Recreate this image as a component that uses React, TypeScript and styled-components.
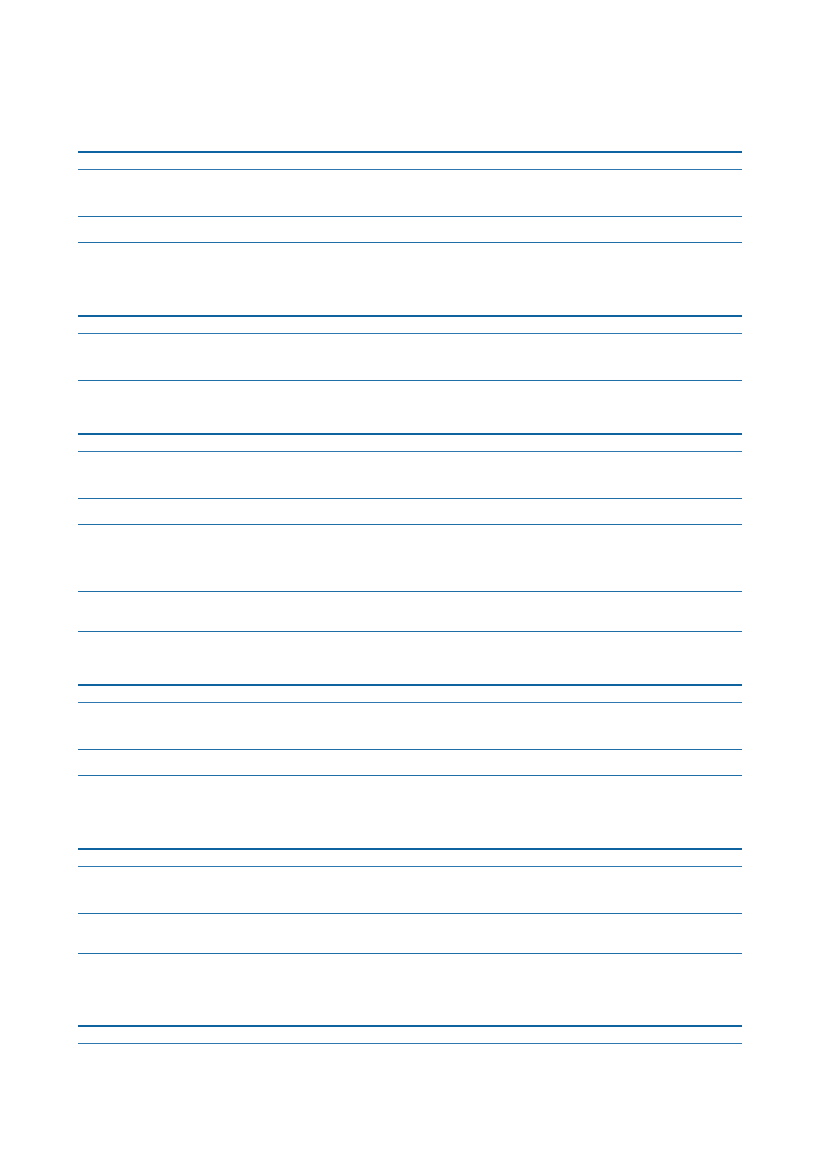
import * as React from 'react';
import styled, { createGlobalStyle } from 'styled-components';

const GlobalStyle = createGlobalStyle`
  html, body {
    margin: 0;
    padding: 0;
    background: #fff;
    font-family: 'Liberation Sans', Arial, sans-serif;
  }
`;

const StyledPage = styled.div`
  width: 827px;
  min-height: 1169px;
  box-sizing: border-box;
  padding: 151px 85px 0 78px;
  display: flex;
  flex-direction: column;
`;

const StyledTable = styled.div<{ $gap: number }>`
  display: flex;
  flex-direction: column;
  margin-top: ${(p) => p.$gap}px;
`;

const StyledHeadRow = styled.div<{ $h: number; $split: number }>`
  display: grid;
  grid-template-columns: ${(p) => p.$split}px 1fr;
  height: ${(p) => p.$h}px;
  border-top: 2px solid #0f64a0;
  border-bottom: 1px solid #2d78af;
`;

const StyledRow = styled.div<{ $h: number; $split: number }>`
  display: grid;
  grid-template-columns: ${(p) => p.$split}px 1fr;
  height: ${(p) => p.$h}px;
  border-bottom: 1px solid #1f6ea8;
`;

const StyledCell = styled.div`
  font-size: 11px;
  color: #222;
`;

type TableSpec = { lines: number[]; split: number };

const tables: TableSpec[] = [
  { lines: [152, 169, 216, 242], split: 499 },
  { lines: [316, 333, 380], split: 499 },
  { lines: [434, 451, 498, 524, 591, 631], split: 499 },
  { lines: [685, 702, 749, 775], split: 546 },
  { lines: [849, 866, 913, 953], split: 546 },
  { lines: [1026, 1043], split: 499 },
];

const App: React.FC = () => {
  return (
    <>
      <GlobalStyle />
      <StyledPage>
        {tables.map((t, ti) => {
          const prev = ti > 0 ? tables[ti - 1].lines : null;
          const gap = prev ? t.lines[0] - prev[prev.length - 1] - 2 : 0;
          return (
            <StyledTable key={ti} $gap={gap}>
              <StyledHeadRow $h={t.lines[1] - t.lines[0] - 1} $split={t.split}>
                <StyledCell />
                <StyledCell />
              </StyledHeadRow>
              {t.lines.slice(2).map((y, ri) => (
                <StyledRow key={ri} $h={y - t.lines[ri + 1] - 1} $split={t.split}>
                  <StyledCell />
                  <StyledCell />
                </StyledRow>
              ))}
            </StyledTable>
          );
        })}
      </StyledPage>
    </>
  );
};

export default App;
